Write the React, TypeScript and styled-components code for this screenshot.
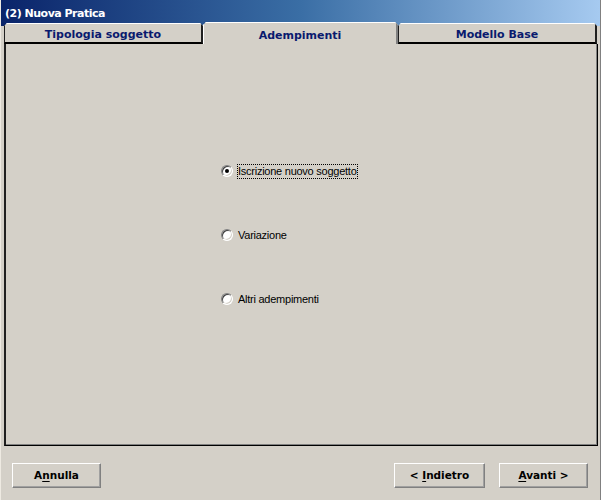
import React from "react"
import styled, { createGlobalStyle } from "styled-components"

const face = "#d4d0c8"

const GlobalStyle = createGlobalStyle`
  html, body {
    margin: 0;
    padding: 0;
    background: ${face};
  }
  * { box-sizing: border-box; }
`

const Window = styled.div`
  width: 601px;
  height: 500px;
  display: flex;
  flex-direction: column;
  background: ${face};
  border-left: 1px solid #eeeae2;
  border-right: 1px solid #808080;
  overflow: hidden;
`

const titleGradient = "linear-gradient(to right, #0a246a 0%, #3a6ea5 50%, #a6caf0 100%)"

const TitleBar = styled.div`
  height: 22px;
  flex: none;
  display: flex;
  align-items: center;
  padding: 4px 0 0 4px;
  background: ${titleGradient};
  color: #fff;
  font-family: "DejaVu Sans", Verdana, sans-serif;
  font-weight: bold;
  font-size: 11px;
  letter-spacing: -0.5px;
`

const TabStrip = styled.div`
  display: flex;
  height: 22px;
  flex: none;
  padding: 0 2px 0 3px;
  background: ${titleGradient} no-repeat top / 100% 4px;
`

const Tab = styled.div<{ $active?: boolean; $w: number }>`
  width: ${p => p.$w}px;
  margin-top: ${p => (p.$active ? 0 : 1)}px;
  display: flex;
  align-items: center;
  justify-content: center;
  padding-top: ${p => (p.$active ? 3 : 2)}px;
  background: ${face};
  border-top: 1px solid #fff;
  border-left: 1px solid ${p => (p.$active ? "#fff" : "#202020")};
  border-right: 2px solid ${p => (p.$active ? "#808080" : "#202020")};
  border-bottom: ${p => (p.$active ? "none" : "2px solid #000")};
  clip-path: polygon(3px 0, calc(100% - 3px) 0, 100% 3px, 100% 100%, 0 100%, 0 3px);
  color: #0a1a6e;
  font-family: "DejaVu Sans", Verdana, sans-serif;
  font-weight: bold;
  font-size: 11px;
`

const Panel = styled.div`
  flex: none;
  height: 402px;
  margin: 0 2px 0 3px;
  border-left: 2px solid #202020;
  border-right: 1px solid #000;
  border-bottom: 1px solid #000;
  box-shadow: inset -1px -1px 0 #808080;
  display: flex;
  flex-direction: column;
  align-items: flex-start;
  padding: 119px 0 0 215px;
  gap: 48px;
`

const RadioRow = styled.label`
  display: flex;
  align-items: center;
  height: 16px;
  font-family: "Liberation Sans", Arial, sans-serif;
  font-size: 11px;
  letter-spacing: -0.25px;
  color: #000;
`

const RadioDot = styled.span<{ $checked?: boolean }>`
  width: 12px;
  height: 12px;
  border-radius: 50%;
  background: #fff;
  border: 1px solid;
  border-color: #808080 #fff #fff #808080;
  box-shadow: inset 1px 1px 0 #404040, inset -1px -1px 0 ${face};
  display: flex;
  align-items: center;
  justify-content: center;
  margin-right: 4px;
  &::after {
    content: "";
    width: 4px;
    height: 4px;
    border-radius: 50%;
    background: ${p => (p.$checked ? "#000" : "transparent")};
  }
`

const RadioText = styled.span<{ $focus?: boolean }>`
  padding: 1px;
  outline: ${p => (p.$focus ? "1px dotted #000" : "none")};
  outline-offset: -1px;
  line-height: 13px;
`

const Footer = styled.div`
  flex: 1;
  display: flex;
  align-items: flex-start;
  padding: 17px 12px 0 11px;
`

const Button = styled.button<{ $w: number }>`
  width: ${p => p.$w}px;
  height: 25px;
  background: ${face};
  border: 1px solid;
  border-color: #fff #808080 #808080 #fff;
  box-shadow: inset -1px -1px 0 #a0a0a0;
  font-family: "DejaVu Sans", Verdana, sans-serif;
  font-weight: bold;
  font-size: 10.5px;
  color: #000;
  padding: 0 0 1px;
  & u { text-underline-offset: 2px; }
`

const Spacer = styled.div`
  flex: 1;
`

const ButtonGap = styled.div`
  width: 14px;
`

export default function App() {
  const options = [
    { label: "Iscrizione nuovo soggetto", checked: true },
    { label: "Variazione", checked: false },
    { label: "Altri adempimenti", checked: false },
  ]
  return (
    <>
      <GlobalStyle />
      <Window>
        <TitleBar>(2) Nuova Pratica</TitleBar>
        <TabStrip>
          <Tab $w={199}>Tipologia soggetto</Tab>
          <Tab $w={195} $active>Adempimenti</Tab>
          <Tab $w={199}>Modello Base</Tab>
        </TabStrip>
        <Panel>
          {options.map(o => (
            <RadioRow key={o.label}>
              <RadioDot $checked={o.checked} />
              <RadioText $focus={o.checked}>{o.label}</RadioText>
            </RadioRow>
          ))}
        </Panel>
        <Footer>
          <Button $w={89}>
            A<u>n</u>nulla
          </Button>
          <Spacer />
          <Button $w={91}>
            &lt; <u>I</u>ndietro
          </Button>
          <ButtonGap />
          <Button $w={89}>
            <u>A</u>vanti &gt;
          </Button>
        </Footer>
      </Window>
    </>
  )
}
